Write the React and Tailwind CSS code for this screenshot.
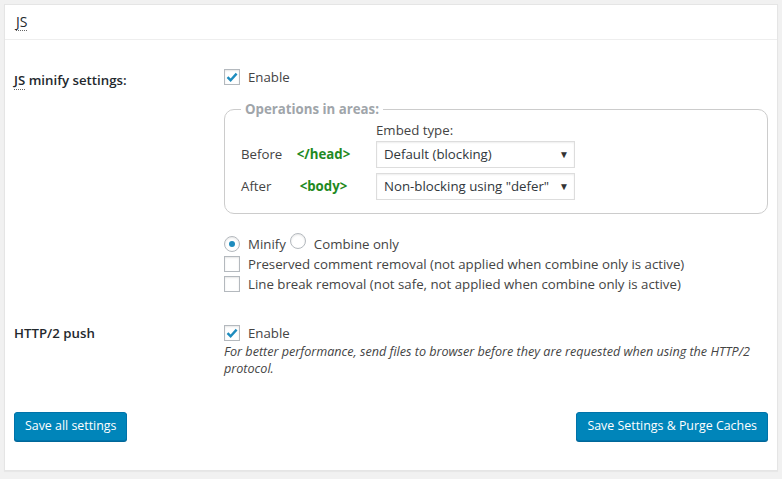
import React from 'react';

const font = { fontFamily: '"Open Sans", "Noto Sans", sans-serif' };

function Check({ checked }) {
  return (
    <span className="inline-flex w-[16px] h-[16px] shrink-0 items-center justify-center border border-[#b4b9be] bg-white shadow-[inset_0_1px_2px_rgba(0,0,0,0.1)]">
      {checked && (
        <svg width="14" height="14" viewBox="0 0 14 14">
          <path d="M2.5 7.2 L5.6 10.2 L11.6 3.6" fill="none" stroke="#1e8cbe" strokeWidth="2.4" />
        </svg>
      )}
    </span>
  );
}

function Radio({ checked }) {
  return (
    <span className="inline-flex w-[16px] h-[16px] shrink-0 items-center justify-center rounded-full border border-[#b4b9be] bg-white shadow-[inset_0_1px_2px_rgba(0,0,0,0.1)]">
      {checked && <span className="w-[6px] h-[6px] rounded-full bg-[#1e8cbe]" />}
    </span>
  );
}

function Select({ value }) {
  return (
    <div className="w-[199px] h-[27px] flex items-center justify-between border border-[#ddd] bg-white shadow-[inset_0_1px_2px_rgba(0,0,0,0.07)] pl-[7px] pr-[5px] text-[#32373c]">
      <span>{value}</span>
      <span className="text-[10px] text-[#333]">▼</span>
    </div>
  );
}

export default function App() {
  return (
    <div className="min-h-[479px] bg-[#f1f1f1] pt-[4px] px-[4px] text-[13.25px] text-[#444]" style={font}>
      <div className="bg-white border border-[#e5e5e5] shadow-[0_1px_1px_rgba(0,0,0,0.04)] w-[774px]">
        {/* header */}
        <div className="h-[35px] flex items-center px-[11px] border-b border-[#eee] text-[14px] text-[#23282d]">
          <abbr className="no-underline border-b border-dotted border-[#666] leading-[17px]">JS</abbr>
        </div>

        <div className="px-[9px] pt-[27px] pb-[29px]">
          {/* JS minify */}
          <div className="flex">
            <div className="w-[210px] pt-[3px] leading-[20px] font-semibold text-[#23282d]">
              <abbr className="no-underline border-b border-dotted border-[#666]">JS</abbr> minify settings:
            </div>
            <div className="flex-1">
              <label className="flex items-center gap-[8px] leading-[20px]">
                <Check checked /> Enable
              </label>

              <fieldset className="mt-[13px] border border-[#ccc] rounded-[10px] px-[16px] pb-[13px]">
                <legend className="px-[4px] leading-[18px] font-bold text-[#a0a5aa]">Operations in areas:</legend>
                <div className="pt-[2px] leading-[20px] ml-[135px]">Embed type:</div>
                <div className="flex flex-col gap-[5px] mt-[1px]">
                  <div className="flex items-center">
                    <span className="w-[50px]">Before</span>
                    <span className="w-[65px] text-center font-bold text-[#1f8a1f]">&lt;/head&gt;</span>
                    <span className="ml-[20px]"><Select value="Default (blocking)" /></span>
                  </div>
                  <div className="flex items-center">
                    <span className="w-[50px]">After</span>
                    <span className="w-[65px] text-center font-bold text-[#1f8a1f]">&lt;body&gt;</span>
                    <span className="ml-[20px]"><Select value={'Non-blocking using "defer"'} /></span>
                  </div>
                </div>
              </fieldset>

              <div className="mt-[19px] leading-[20px]">
                <div className="flex items-center">
                  <Radio checked />
                  <span className="ml-[8px]">Minify</span>
                  <span className="ml-[4px]"><Radio /></span>
                  <span className="ml-[8px]">Combine only</span>
                </div>
                <label className="flex items-center gap-[8px]">
                  <Check /> Preserved comment removal (not applied when combine only is active)
                </label>
                <label className="flex items-center gap-[8px]">
                  <Check /> Line break removal (not safe, not applied when combine only is active)
                </label>
              </div>
            </div>
          </div>

          {/* HTTP/2 */}
          <div className="flex mt-[29px]">
            <div className="w-[210px] leading-[20px] font-semibold text-[#23282d]">HTTP/2 push</div>
            <div className="flex-1">
              <label className="flex items-center gap-[8px] leading-[20px]">
                <Check checked /> Enable
              </label>
              <p className="italic leading-[17px] text-[12.6px]">
                For better performance, send files to browser before they are requested when using the HTTP/2 protocol.
              </p>
            </div>
          </div>

          {/* buttons */}
          <div className="flex justify-between mt-[35px]">
            <button className="h-[29px] px-[10px] rounded-[3px] bg-[#0085ba] border border-[#0073aa] shadow-[0_1px_0_#006799] text-white text-[12.4px]">
              Save all settings
            </button>
            <button className="h-[29px] px-[10px] rounded-[3px] bg-[#0085ba] border border-[#0073aa] shadow-[0_1px_0_#006799] text-white text-[12.4px]">
              Save Settings &amp; Purge Caches
            </button>
          </div>
        </div>
      </div>
    </div>
  );
}
